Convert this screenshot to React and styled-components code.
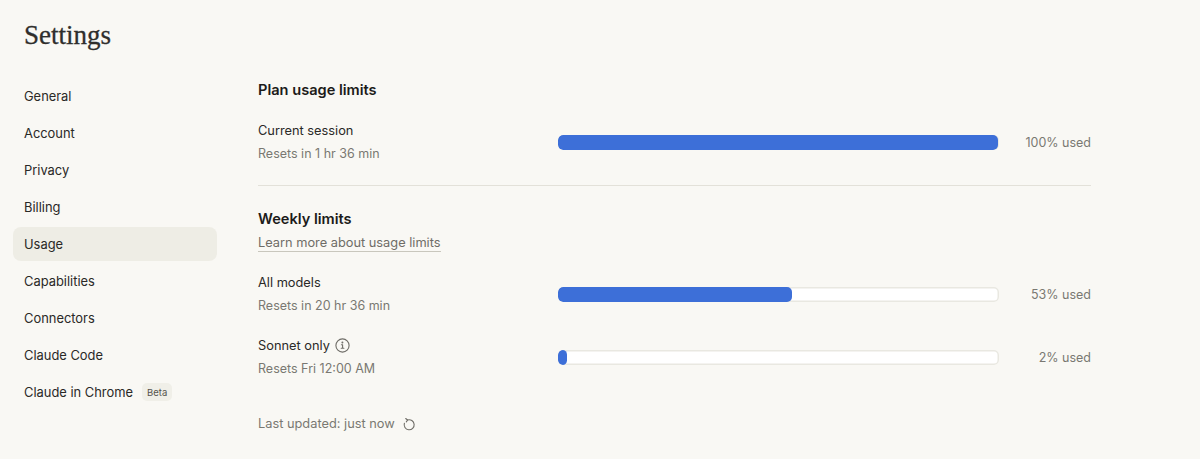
import React from "react";
import styled, { createGlobalStyle } from "styled-components";

const NAV_ITEMS = [
  "General",
  "Account",
  "Privacy",
  "Billing",
  "Usage",
  "Capabilities",
  "Connectors",
  "Claude Code",
  "Claude in Chrome",
];

const GlobalStyle = createGlobalStyle`
  html, body {
    margin: 0;
    padding: 0;
    background: #f9f8f4;
  }
  body {
    font-family: "Inter", "Liberation Sans", sans-serif;
    color: #1f1e1d;
  }
`;

const Page = styled.div`
  width: 1200px;
  height: 459px;
  overflow: hidden;
  box-sizing: border-box;
  padding: 18px 109px 0 13px;
  background: #f9f8f4;
`;

const Title = styled.h1`
  margin: 0 0 0 11px;
  height: 34px;
  font-family: "Liberation Serif", serif;
  font-weight: 400;
  font-size: 27px;
  line-height: 34px;
  color: #2f2e2c;
  -webkit-text-stroke: 0.3px #2f2e2c;
`;

const Columns = styled.div`
  display: flex;
  margin-top: 26px;
`;

const Sidebar = styled.nav`
  width: 204px;
  flex-shrink: 0;
  display: flex;
  flex-direction: column;
  gap: 3px;
  padding-top: 1px;
`;

const NavItem = styled.div`
  height: 34px;
  display: flex;
  align-items: center;
  gap: 9px;
  padding-left: 11px;
  border-radius: 8px;
  font-size: 12.9px;
  color: #2a2927;
  background: ${(p) => (p.$active ? "#eeede5" : "transparent")};
`;

const Badge = styled.span`
  height: 18px;
  padding: 0 5px;
  display: flex;
  align-items: center;
  border-radius: 5px;
  font-size: 9.5px;
  color: #55534e;
  background: #f0efe8;
`;

const Main = styled.main`
  flex: 1;
  margin-left: 41px;
  padding-top: 2px;
`;

const Heading = styled.h2`
  margin: 0;
  font-size: 14.6px;
  line-height: 20px;
  font-weight: 600;
  color: #1c1b1a;
`;

const LearnLink = styled.a`
  display: inline-block;
  margin-top: 5px;
  font-size: 12.8px;
  line-height: 17px;
  color: #6f6d67;
  border-bottom: 1px solid #c9c7bd;
`;

const Row = styled.div`
  display: flex;
  align-items: center;
  height: 46px;
  margin-top: ${(p) => p.$top}px;
`;

const RowText = styled.div`
  width: 300px;
  flex-shrink: 0;
  display: flex;
  flex-direction: column;
  gap: 6px;
`;

const RowLabel = styled.div`
  display: flex;
  align-items: center;
  gap: 5px;
  font-size: 12.8px;
  line-height: 17px;
  color: #2a2927;
`;

const RowHint = styled.div`
  font-size: 12.5px;
  line-height: 17px;
  color: #7a7872;
`;

const Track = styled.div`
  width: 441px;
  height: 15px;
  flex-shrink: 0;
  overflow: hidden;
  border-radius: 5px;
  background: #ffffff;
  box-shadow: inset 0 0 0 1.5px #e9e8e1;
`;

const Fill = styled.div`
  height: 100%;
  max-width: 440px;
  border-radius: 5px;
  background: #3d6fd8;
`;

const Percent = styled.div`
  flex: 1;
  text-align: right;
  font-size: 12.5px;
  color: #7a7872;
`;

const Divider = styled.hr`
  margin: 20px 0 23px;
  border: 0;
  border-top: 1px solid #e3e1d9;
`;

const Updated = styled.div`
  display: flex;
  align-items: center;
  gap: 7px;
  margin-top: 35px;
  font-size: 12.8px;
  line-height: 18px;
  color: #7a7872;
`;

const Glyph = styled.svg`
  width: 15px;
  height: 15px;
  fill: none;
  stroke: #6f6d67;
  stroke-width: 1.1;
  stroke-linecap: round;
  stroke-linejoin: round;
`;

const InfoIcon = () => (
  <Glyph viewBox="0 0 15 15">
    <circle cx="7.5" cy="7.5" r="6.6" />
    <path d="M6.4 6.7h1.2v3.4M6.2 10.3h2.7" />
    <circle cx="7.4" cy="4.6" r="0.45" />
  </Glyph>
);

const RefreshIcon = () => (
  <Glyph viewBox="0 0 15 15">
    <path d="M5.6 3a5 5 0 1 1-3.2 3.2" />
    <path d="M3.7 1.5l1.9 1.5-1.3 1.9" />
  </Glyph>
);

const UsageRow = ({ label, hint, used, top, info }) => (
  <Row $top={top}>
    <RowText>
      <RowLabel>
        {label}
        {info && <InfoIcon />}
      </RowLabel>
      <RowHint>{hint}</RowHint>
    </RowText>
    <Track>
      <Fill style={{ width: `${used}%` }} />
    </Track>
    <Percent>{used}% used</Percent>
  </Row>
);

export default function App() {
  return (
    <Page>
      <GlobalStyle />
      <Title>Settings</Title>
      <Columns>
        <Sidebar>
          {NAV_ITEMS.map((item) => (
            <NavItem key={item} $active={item === "Usage"}>
              {item}
              {item === "Claude in Chrome" && <Badge>Beta</Badge>}
            </NavItem>
          ))}
        </Sidebar>
        <Main>
          <Heading>Plan usage limits</Heading>
          <UsageRow
            label="Current session"
            hint="Resets in 1 hr 36 min"
            used={100}
            top={19}
          />
          <Divider />
          <Heading>Weekly limits</Heading>
          <LearnLink>Learn more about usage limits</LearnLink>
          <UsageRow
            label="All models"
            hint="Resets in 20 hr 36 min"
            used={53}
            top={19}
          />
          <UsageRow
            label="Sonnet only"
            hint="Resets Fri 12:00 AM"
            used={2}
            top={17}
            info
          />
          <Updated>
            Last updated: just now
            <RefreshIcon />
          </Updated>
        </Main>
      </Columns>
    </Page>
  );
}
